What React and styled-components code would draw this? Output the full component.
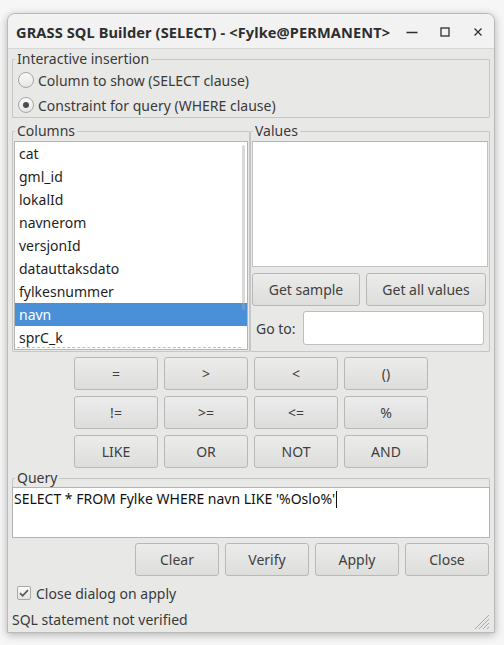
import styled, { createGlobalStyle } from "styled-components";

/* Global ---------------------------*/
const GlobalStyle = createGlobalStyle`
    html, body {
        margin: 0;
        padding: 0;
        background: #f6f6f6;
    }
    body {
        font-family: "Noto Sans", "DejaVu Sans", sans-serif;
        font-size: 14px;
        color: #2b2b2b;
    }
    * {
        box-sizing: border-box;
    }
`;

const columns = [
    "cat",
    "gml_id",
    "lokalId",
    "navnerom",
    "versjonId",
    "datauttaksdato",
    "fylkesnummer",
    "navn",
    "sprC_k",
];

const operators = ["=", ">", "<", "()", "!=", ">=", "<=", "%", "LIKE", "OR", "NOT", "AND"];

const App = () => {
    return (
        <>
            <GlobalStyle />
            <Desktop>
                <Window>
                    <TitleBar>
                        <Title>GRASS SQL Builder (SELECT) - &lt;Fylke@PERMANENT&gt;</Title>
                        <Controls>
                            <svg width="12" height="12" viewBox="0 0 12 12">
                                <path d="M0.5 6.5h11" stroke="#2e2e2e" strokeWidth="1.3" />
                            </svg>
                            <svg width="12" height="12" viewBox="0 0 12 12">
                                <rect x="2" y="2" width="8" height="8" fill="none" stroke="#2e2e2e" strokeWidth="1.3" />
                            </svg>
                            <svg width="12" height="12" viewBox="0 0 12 12">
                                <path d="M2.5 2.5l7 7M9.5 2.5l-7 7" stroke="#2e2e2e" strokeWidth="1.2" />
                            </svg>
                        </Controls>
                    </TitleBar>

                    <Body>
                        <Group>
                            <Legend>Interactive insertion</Legend>
                            <Options>
                                <Option>
                                    <Radio />
                                    Column to show (SELECT clause)
                                </Option>
                                <Option>
                                    <Radio $checked />
                                    Constraint for query (WHERE clause)
                                </Option>
                            </Options>
                        </Group>

                        <Split>
                            <Group>
                                <Legend>Columns</Legend>
                                <ListBox>
                                    {columns.map((c) => (
                                        <ListItem key={c} $selected={c === "navn"}>
                                            {c}
                                        </ListItem>
                                    ))}
                                    <ScrollThumb />
                                </ListBox>
                            </Group>
                            <Group>
                                <Legend>Values</Legend>
                                <ValuesBox />
                                <SampleRow>
                                    <Button $w="108px">Get sample</Button>
                                    <Button $w="120px">Get all values</Button>
                                </SampleRow>
                                <GotoRow>
                                    <span>Go to:</span>
                                    <TextInput />
                                </GotoRow>
                            </Group>
                        </Split>

                        <OpGrid>
                            {operators.map((op) => (
                                <Button key={op}>{op}</Button>
                            ))}
                        </OpGrid>

                        <QueryGroup>
                            <Legend>Query</Legend>
                            <QueryBox>
                                SELECT * FROM Fylke WHERE navn LIKE '%Oslo%'
                                <Caret />
                            </QueryBox>
                        </QueryGroup>

                        <ActionRow>
                            <Button>Clear</Button>
                            <Button>Verify</Button>
                            <Button>Apply</Button>
                            <Button>Close</Button>
                        </ActionRow>

                        <CheckRow>
                            <CheckBox>
                                <svg width="12" height="12" viewBox="0 0 12 12">
                                    <path d="M2 6.2l2.6 2.6L10 3.2" fill="none" stroke="#5a5a5a" strokeWidth="1.8" />
                                </svg>
                            </CheckBox>
                            Close dialog on apply
                        </CheckRow>

                        <Status>SQL statement not verified</Status>
                        <Grip>
                            <svg width="16" height="16" viewBox="0 0 16 16">
                                <path d="M15 5L5 15M15 9L9 15M15 13L13 15M15 1L1 15" stroke="#a9a9a9" strokeWidth="1" />
                            </svg>
                        </Grip>
                    </Body>
                </Window>
            </Desktop>
        </>
    );
};

export default App;

/* Styles ---------------------------*/
const Desktop = styled.div`
    padding: 13px 9px 13px 7px;
`;

const Window = styled.div`
    width: 488px;
    height: 620px;
    display: flex;
    flex-direction: column;
    border: 1px solid #b9b9b9;
    border-radius: 8px 8px 0 0;
    overflow: hidden;
    box-shadow: 0 2px 9px rgba(0, 0, 0, 0.28);
    background: #e8e8e7;
`;

const TitleBar = styled.div`
    height: 35px;
    flex: none;
    display: flex;
    align-items: center;
    justify-content: space-between;
    padding: 0 10px 0 8px;
    background: #f2f2f2;
    border-bottom: 1px solid #d6d6d6;
`;

const Title = styled.div`
    font-weight: bold;
    font-size: 14.6px;
    letter-spacing: 0.1px;
    color: #2e2e2e;
    padding-top: 2px;
    white-space: nowrap;
`;

const Controls = styled.div`
    display: flex;
    align-items: center;
    gap: 21px;
    padding-top: 2px;
`;

const Body = styled.div`
    position: relative;
    flex: 1;
    display: flex;
    flex-direction: column;
    padding: 3px 4px 0 4px;
`;

const Group = styled.fieldset`
    margin: 0;
    padding: 0;
    min-width: 0;
    border: 1px solid #c6c6c4;
    border-radius: 1px;
`;

const QueryGroup = styled(Group)`
    margin-top: 3px;
`;

const Legend = styled.legend`
    padding: 0 2px;
    margin-left: 2px;
    line-height: 14px;
    height: 14px;
    color: #3a3a3a;
`;

const Options = styled.div`
    display: flex;
    flex-direction: column;
    gap: 1px;
    padding: 2px 0 0 5px;
`;

const Option = styled.label`
    height: 24px;
    display: flex;
    align-items: center;
    gap: 4px;
    color: #3a3a3a;
`;

const Radio = styled.span`
    width: 16px;
    height: 16px;
    border-radius: 50%;
    border: 1px solid #a6a6a6;
    background: linear-gradient(#fafafa, #e6e6e6);
    display: flex;
    align-items: center;
    justify-content: center;

    &::after {
        content: "";
        width: 6px;
        height: 6px;
        border-radius: 50%;
        background: ${(p) => (p.$checked ? "#4d4d4d" : "transparent")};
    }
`;

const Split = styled.div`
    margin-top: 6px;
    display: grid;
    grid-template-columns: 238px 240px;
    height: 227px;

    & > fieldset {
        display: flex;
        flex-direction: column;
    }
`;

const ListBox = styled.div`
    position: relative;
    flex: 1;
    margin: 3px 1px 1px 1px;
    background: #ffffff;
    border: 1px solid #b4b4b2;
    overflow: hidden;

    &::after {
        content: "";
        position: absolute;
        left: 2px;
        right: 6px;
        bottom: 1px;
        border-bottom: 1px dashed #bdbdbd;
    }
`;

const ListItem = styled.div`
    height: 23px;
    line-height: 23px;
    padding-left: 4px;
    color: ${(p) => (p.$selected ? "#ffffff" : "#1e1e1e")};
    background: ${(p) => (p.$selected ? "#4a90d9" : "transparent")};
`;

const ScrollThumb = styled.div`
    position: absolute;
    top: 3px;
    right: 2px;
    width: 3px;
    height: 165px;
    border-radius: 2px;
    background: rgba(170, 170, 170, 0.45);
`;

const ValuesBox = styled.div`
    height: 126px;
    margin: 3px 1px 0 1px;
    background: #ffffff;
    border: 1px solid #c2c2c0;
    border-top-color: #b4b4b2;
`;

const SampleRow = styled.div`
    display: flex;
    gap: 6px;
    margin: 6px 0 0 1px;
`;

const Button = styled.div`
    width: ${(p) => p.$w || "84px"};
    height: 33px;
    display: flex;
    align-items: center;
    justify-content: center;
    border: 1px solid #b8b8b6;
    border-radius: 3px;
    background: linear-gradient(#ececec, #dddddc);
    color: #404040;
    white-space: nowrap;
`;

const GotoRow = styled.div`
    display: flex;
    align-items: center;
    gap: 7px;
    margin: 5px 5px 0 5px;
    color: #3a3a3a;
`;

const TextInput = styled.div`
    flex: 1;
    height: 34px;
    background: #ffffff;
    border: 1px solid #bebebe;
    border-radius: 3px;
`;

const OpGrid = styled.div`
    margin-top: 6px;
    display: grid;
    grid-template-columns: repeat(4, 84px);
    gap: 6px;
    justify-content: center;
`;

const QueryBox = styled.div`
    height: 51px;
    padding: 2px 1px;
    background: #ffffff;
    border: 1px solid #b4b4b2;
    margin: 2px -1px -1px -1px;
    color: #111111;
    line-height: 17px;
    white-space: nowrap;
`;

const Caret = styled.span`
    display: inline-block;
    width: 1px;
    height: 17px;
    margin-left: 1px;
    vertical-align: -4px;
    background: #111111;
`;

const ActionRow = styled.div`
    margin-top: 5px;
    display: flex;
    justify-content: flex-end;
    gap: 6px;
    padding-right: 1px;
`;

const CheckRow = styled.label`
    margin-top: 10px;
    height: 14px;
    display: flex;
    align-items: center;
    gap: 5px;
    padding-left: 5px;
    color: #3a3a3a;
`;

const CheckBox = styled.span`
    width: 14px;
    height: 14px;
    border: 1px solid #a8a8a8;
    border-radius: 2px;
    background: linear-gradient(#fafafa, #e4e4e4);
    display: flex;
    align-items: center;
    justify-content: center;
`;

const Status = styled.div`
    margin-top: 13px;
    line-height: 14px;
    color: #3a3a3a;
`;

const Grip = styled.div`
    position: absolute;
    right: 4px;
    bottom: 2px;
    display: flex;
`;
